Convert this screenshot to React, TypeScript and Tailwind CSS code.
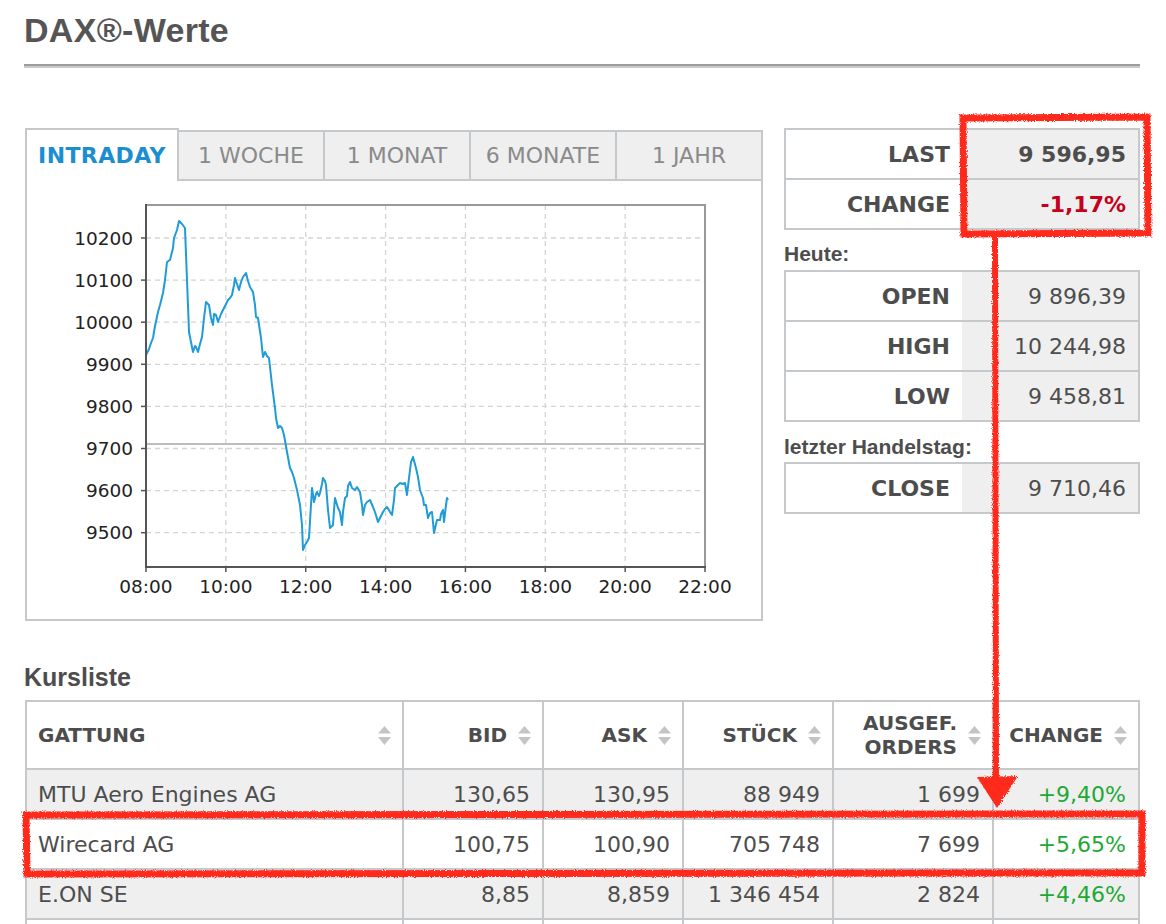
import React from "react";

const line = "border-[#c6c9cc]";

const Y_TICKS = [10200, 10100, 10000, 9900, 9800, 9700, 9600, 9500];
const X_TICKS = ["08:00", "10:00", "12:00", "14:00", "16:00", "18:00", "20:00", "22:00"];
const yOf = (v: number) => 238 + (10200 - v) * 0.421;
const xOf = (i: number) => 146 + i * 79.86;

// traced intraday series (page coordinates)
const SERIES: [number, number][] = [
  [146, 355], [149, 349], [151, 343], [153, 338], [155, 326], [158, 312], [160, 305], [163, 293],
  [165, 280], [167, 262], [170, 260], [172, 252], [173, 248], [174, 238], [177, 230], [179, 221],
  [182, 224], [185, 228], [187, 280], [189, 332], [191, 342], [193, 352], [195, 346], [196, 347],
  [198, 352], [200, 344], [202, 337], [204, 318], [206, 302], [209, 305], [211, 318], [213, 325],
  [214, 314], [216, 315], [218, 322], [221, 314], [224, 308], [228, 300], [230, 298], [232, 295],
  [234, 285], [235, 278], [237, 284], [239, 290], [241, 282], [243, 277], [246, 273], [248, 281],
  [250, 287], [253, 292], [255, 305], [256, 317], [258, 318], [261, 338], [263, 357], [265, 352],
  [267, 356], [269, 358], [272, 385], [275, 408], [276, 418], [278, 428], [280, 426], [282, 428],
  [284, 435], [287, 452], [290, 468], [292, 472], [294, 478], [297, 490], [300, 505], [302, 525],
  [303, 550], [305, 545], [307, 542], [309, 538], [311, 505], [312, 488], [314, 502], [316, 494],
  [317, 492], [319, 496], [320, 493], [322, 484], [323, 478], [325, 481], [326, 485], [328, 510],
  [330, 528], [333, 525], [334, 510], [335, 498], [338, 508], [340, 512], [342, 525], [343, 512],
  [345, 498], [347, 496], [348, 486], [350, 482], [352, 488], [355, 490], [357, 487], [360, 492],
  [362, 505], [363, 515], [365, 505], [367, 502], [370, 500], [373, 507], [375, 512], [378, 522],
  [380, 518], [383, 512], [385, 509], [387, 507], [390, 512], [392, 515], [394, 500], [395, 488],
  [398, 485], [400, 483], [403, 484], [405, 483], [407, 495], [409, 478], [411, 462], [413, 457],
  [416, 468], [418, 477], [420, 490], [423, 498], [424, 505], [426, 505], [428, 518], [430, 513],
  [432, 512], [434, 533], [436, 524], [437, 520], [440, 520], [441, 514], [443, 510], [444, 522],
  [446, 505], [447, 498], [448, 500],
];

function SortIcon() {
  return (
    <svg width="13" height="19" viewBox="0 0 13 19" className="shrink-0">
      <path d="M6.5 0L13 7.5H0Z" fill="#c4c4c4" />
      <path d="M0 11H13L6.5 19Z" fill="#c4c4c4" />
    </svg>
  );
}

function Chart() {
  const d = SERIES.map(([x, y], i) => `${i ? "L" : "M"}${x} ${y}`).join(" ");
  return (
    <svg width="734" height="438" viewBox="27 181 734 438" className="block">
      {Y_TICKS.map((v) => (
        <line key={v} x1="146" x2="705" y1={yOf(v)} y2={yOf(v)} stroke="#d4d4d4" strokeWidth="1.3" strokeDasharray="5 4" />
      ))}
      {X_TICKS.map((t, i) => (i > 0 && i < 7 ? (
        <line key={t} x1={xOf(i)} x2={xOf(i)} y1="205" y2="567" stroke="#d4d4d4" strokeWidth="1.3" strokeDasharray="5 4" />
      ) : null))}
      <line x1="146" x2="705" y1={yOf(9710.46)} y2={yOf(9710.46)} stroke="#bdbdbd" strokeWidth="2" />
      <path d={d} fill="none" stroke="#1f9bd7" strokeWidth="2" strokeLinejoin="round" />
      <line x1="146" x2="706" y1="205" y2="205" stroke="#999" strokeWidth="2" />
      <line x1="705" x2="705" y1="205" y2="567" stroke="#999" strokeWidth="2" />
      <line x1="146" x2="146" y1="204" y2="568" stroke="#555" strokeWidth="2" />
      <line x1="145" x2="706" y1="567" y2="567" stroke="#555" strokeWidth="2" />
      {Y_TICKS.map((v) => (
        <g key={v}>
          <line x1="141" x2="146" y1={yOf(v)} y2={yOf(v)} stroke="#555" strokeWidth="1.5" />
          <text x="133" y={yOf(v) + 6.5} textAnchor="end" fontFamily="DejaVu Sans" fontSize="18.5" fill="#222">{v}</text>
        </g>
      ))}
      {X_TICKS.map((t, i) => (
        <g key={t}>
          <line x1={xOf(i)} x2={xOf(i)} y1="567" y2="572" stroke="#555" strokeWidth="1.5" />
          <text x={xOf(i)} y="593" textAnchor="middle" fontFamily="DejaVu Sans" fontSize="18.5" fill="#222">{t}</text>
        </g>
      ))}
    </svg>
  );
}

type Stat = { label: string; value: string; valueCls?: string };

function StatTable({ rows }: { rows: Stat[] }) {
  return (
    <div className={`border-x-2 border-t-2 ${line}`}>
      {rows.map((r) => (
        <div key={r.label} className={`flex h-[50px] border-b-2 ${line}`}>
          <div className="flex w-[176px] items-center justify-end pr-[12px] text-[22px] font-bold text-[#4d4d4d]">{r.label}</div>
          <div className={`flex flex-1 items-center justify-end bg-[#efefef] pr-[12px] text-[22px] ${r.valueCls ?? "text-[#4d4d4d]"}`}>{r.value}</div>
        </div>
      ))}
    </div>
  );
}

const ROWS = [
  { name: "MTU Aero Engines AG", bid: "130,65", ask: "130,95", stk: "88 949", ord: "1 699", chg: "+9,40%", bg: "bg-[#efefef]" },
  { name: "Wirecard AG", bid: "100,75", ask: "100,90", stk: "705 748", ord: "7 699", chg: "+5,65%", bg: "bg-white" },
  { name: "E.ON SE", bid: "8,85", ask: "8,859", stk: "1 346 454", ord: "2 824", chg: "+4,46%", bg: "bg-[#efefef]" },
];

export default function App() {
  const cell = `border-r-2 border-b-2 ${line}`;
  return (
    <div className="relative min-h-[924px] overflow-hidden bg-white px-[24px] pt-[10px] font-['DejaVu_Sans',Verdana,sans-serif] text-[#4d4d4d]">
      <h1 className="font-['Liberation_Sans',Arial,sans-serif] text-[34px] font-bold leading-[40px] tracking-[0.3px] text-[#555]">DAX®-Werte</h1>
      <div className="mt-[14px] w-[1116px]">
        <div className="h-[2px] bg-[#9c9c9c]" />
        <div className="h-[2px] bg-[#cacaca]" />
      </div>

      <div className="mt-[60px] flex w-[1116px] items-start">
        {/* chart panel */}
        <div className="ml-[1px] w-[738px]">
          <div className="flex h-[53px] items-end">
            <div className={`flex h-[53px] w-[154px] items-center justify-center border-x-2 border-t-2 bg-white text-[22px] font-bold tracking-[0.4px] text-[#1b8ed2] ${line}`}>INTRADAY</div>
            {["1 WOCHE", "1 MONAT", "6 MONATE", "1 JAHR"].map((t) => (
              <div key={t} className={`flex h-[51px] w-[146px] items-center justify-center border-y-2 border-r-2 bg-[#efefef] text-[22px] text-[#8a8a8a] ${line}`}>{t}</div>
            ))}
          </div>
          <div className={`h-[440px] border-x-2 border-b-2 ${line}`}>
            <Chart />
          </div>
        </div>

        {/* quote panel */}
        <div className="ml-auto w-[356px]">
          <StatTable
            rows={[
              { label: "LAST", value: "9 596,95", valueCls: "font-bold text-[#4d4d4d]" },
              { label: "CHANGE", value: "-1,17%", valueCls: "font-bold text-[#c4001c]" },
            ]}
          />
          <div className="flex h-[40px] items-end pb-[5px] font-['Liberation_Sans',Arial,sans-serif] text-[21px] font-bold leading-[22px] text-[#4d4d4d]">Heute:</div>
          <StatTable
            rows={[
              { label: "OPEN", value: "9 896,39" },
              { label: "HIGH", value: "10 244,98" },
              { label: "LOW", value: "9 458,81" },
            ]}
          />
          <div className="flex h-[40px] items-end pb-[4px] font-['Liberation_Sans',Arial,sans-serif] text-[21px] font-bold leading-[22px] text-[#4d4d4d]">letzter Handelstag:</div>
          <StatTable rows={[{ label: "CLOSE", value: "9 710,46" }]} />
        </div>
      </div>

      <h2 className="mt-[42px] font-['Liberation_Sans',Arial,sans-serif] text-[25px] font-bold leading-[28px] text-[#4d4d4d]">Kursliste</h2>
      <div className={`mt-[9px] ml-[1px] grid w-[1115px] grid-cols-[377px_140px_140px_150px_160px_146px] border-l-2 border-t-2 ${line}`}>
        <div className={`flex h-[68px] items-center justify-between pl-[11px] pr-[11px] text-[20px] font-bold ${cell}`}>
          GATTUNG <SortIcon />
        </div>
        {["BID", "ASK", "STÜCK"].map((h) => (
          <div key={h} className={`flex h-[68px] items-center justify-end gap-[11px] pr-[11px] text-[20px] font-bold ${cell}`}>
            {h} <SortIcon />
          </div>
        ))}
        <div className={`flex h-[68px] items-center justify-end gap-[11px] pr-[11px] text-[20px] font-bold ${cell}`}>
          <div className="text-right leading-[24px]">AUSGEF.<br />ORDERS</div>
          <SortIcon />
        </div>
        <div className={`flex h-[68px] items-center justify-end gap-[11px] pr-[11px] text-[20px] font-bold ${cell}`}>
          CHANGE <SortIcon />
        </div>

        {ROWS.map((r) => (
          <React.Fragment key={r.name}>
            <div className={`flex h-[50px] items-center pl-[11px] text-[22px] ${r.bg} ${cell}`}>{r.name}</div>
            <div className={`flex h-[50px] items-center justify-end pr-[12px] text-[22px] ${r.bg} ${cell}`}>{r.bid}</div>
            <div className={`flex h-[50px] items-center justify-end pr-[12px] text-[22px] ${r.bg} ${cell}`}>{r.ask}</div>
            <div className={`flex h-[50px] items-center justify-end pr-[12px] text-[22px] ${r.bg} ${cell}`}>{r.stk}</div>
            <div className={`flex h-[50px] items-center justify-end pr-[12px] text-[22px] ${r.bg} ${cell}`}>{r.ord}</div>
            <div className={`flex h-[50px] items-center justify-end pr-[12px] text-[22px] text-[#1ea934] ${r.bg} ${cell}`}>{r.chg}</div>
          </React.Fragment>
        ))}
        {[0, 1, 2, 3, 4, 5].map((i) => (
          <div key={i} className={`h-[50px] bg-white ${cell}`} />
        ))}
      </div>

      {/* hand-drawn annotation overlay */}
      <svg className="pointer-events-none absolute left-0 top-0" width="1166" height="924" viewBox="0 0 1166 924">
        <defs>
          <filter id="rough" x="-5%" y="-5%" width="110%" height="110%">
            <feTurbulence type="fractalNoise" baseFrequency="0.9" numOctaves="2" result="n" />
            <feDisplacementMap in="SourceGraphic" in2="n" scale="4" />
          </filter>
        </defs>
        <g filter="url(#rough)" stroke="#ff2a1c" fill="none" strokeWidth="7">
          <path d="M963 118 L1147 117 L1148 233 L964 234 Z" />
          <path d="M995 237 L995.5 500 L996 785" strokeWidth="6" />
          <path d="M26 815 L1142 814 L1142 873 L27 874 Z" />
        </g>
        <g filter="url(#rough)">
          <path d="M977 777 L1018 776 L997 808 Z" fill="#ff2a1c" />
        </g>
      </svg>
    </div>
  );
}
